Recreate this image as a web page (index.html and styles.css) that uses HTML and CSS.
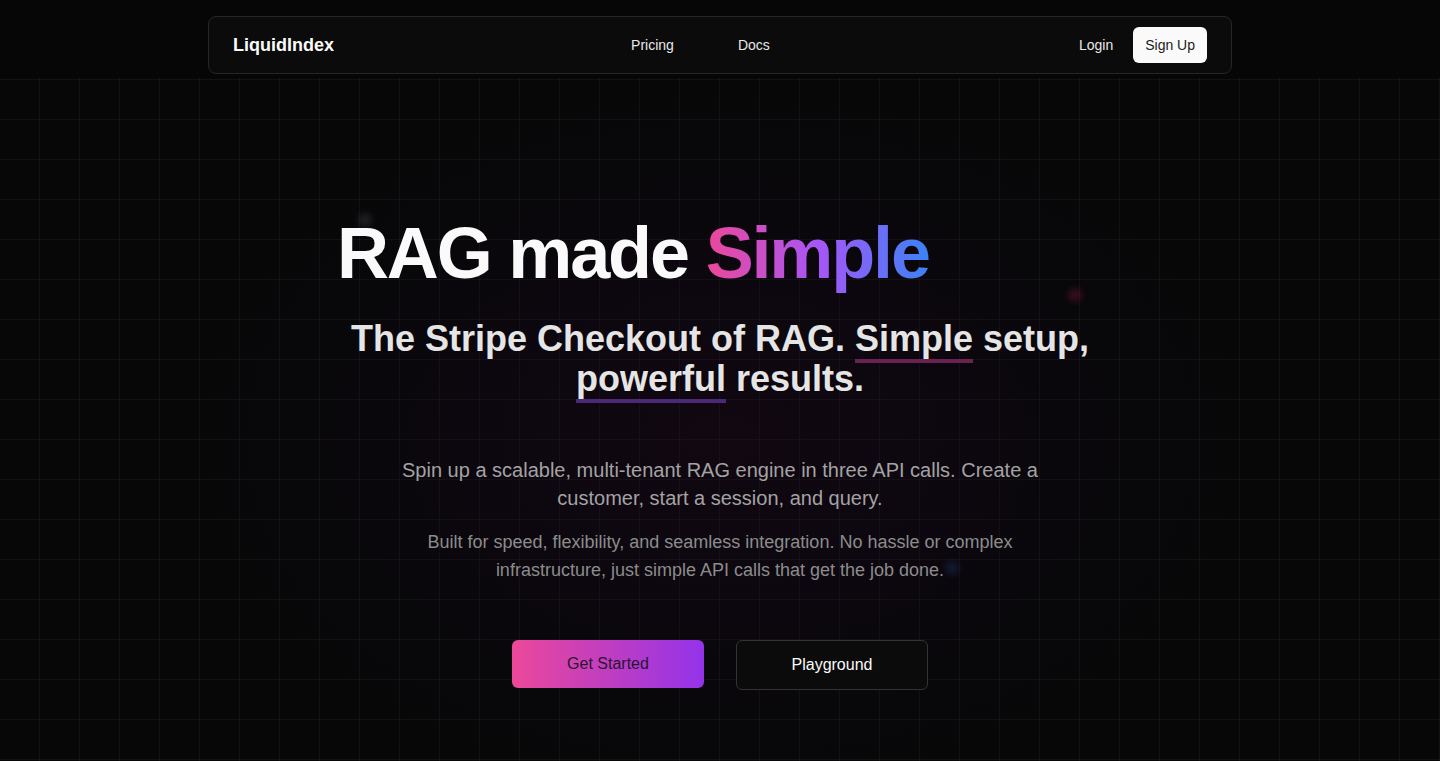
FILE: index.html
```html
<!DOCTYPE html>
<html lang="en">
<head>
<meta charset="utf-8">
<title>LiquidIndex</title>
<link rel="stylesheet" href="styles.css">
</head>
<body>
<div class="page">
  <div class="glow"></div>
  <span class="spark spark-a"></span>
  <span class="spark spark-b"></span>
  <span class="spark spark-c"></span>
  <header class="header">
    <nav class="nav">
      <a class="logo" href="#">LiquidIndex</a>
      <div class="links">
        <a class="link" href="#">Pricing</a>
        <a class="link" href="#">Docs</a>
      </div>
      <div class="auth">
        <a class="login" href="#">Login</a>
        <a class="signup" href="#">Sign Up</a>
      </div>
    </nav>
  </header>
  <main class="hero">
    <div class="title-wrap">
      <h1 class="title">RAG made <span class="grad">Simple</span></h1>
    </div>
    <h2 class="subtitle">The Stripe Checkout of RAG. <span class="ul ul-pink">Simple</span> setup, <span class="ul ul-purple">powerful</span> results.</h2>
    <p class="lead">Spin up a scalable, multi-tenant RAG engine in three API calls. Create a customer, start a session, and query.</p>
    <p class="lead2">Built for speed, flexibility, and seamless integration. No hassle or complex infrastructure, just simple API calls that get the job done.</p>
    <div class="actions">
      <a class="btn btn-primary" href="#">Get Started</a>
      <a class="btn btn-outline" href="#">Playground</a>
    </div>
  </main>
</div>
</body>
</html>
```

FILE: styles.css
```css
* { box-sizing: border-box; }
html, body { margin: 0; padding: 0; }
body {
  background: #070707;
  font-family: "Liberation Sans", Arial, sans-serif;
  color: #fafafa;
  overflow: hidden;
}
a { text-decoration: none; color: inherit; }

.page {
  position: relative;
  min-height: 761px;
  background-color: #070707;
  background-image:
    linear-gradient(to right, transparent 39px, rgba(255,255,255,0.045) 39px, rgba(255,255,255,0.045) 40px),
    linear-gradient(to bottom, transparent 39px, rgba(255,255,255,0.045) 39px, rgba(255,255,255,0.045) 40px);
  background-size: 40px 40px;
  overflow: hidden;
}

.glow {
  position: absolute;
  left: 120px;
  top: 40px;
  width: 1200px;
  height: 800px;
  background: radial-gradient(closest-side, rgba(40,8,40,0.30) 0%, rgba(28,8,38,0.24) 40%, rgba(14,8,26,0.14) 70%, rgba(0,0,0,0) 100%);
  pointer-events: none;
}

.spark {
  position: absolute;
  width: 14px;
  height: 14px;
  border-radius: 50%;
  filter: blur(3px);
}
.spark-a { left: 358px; top: 213px; background: rgba(120,120,140,0.2); }
.spark-b { left: 1068px; top: 288px; background: rgba(160,30,70,0.3); }
.spark-c { left: 945px; top: 561px; background: rgba(40,60,140,0.3); }

.header {
  position: relative;
  height: 78px;
  background: #060606;
  padding-top: 16px;
}

.nav {
  width: 1024px;
  height: 58px;
  margin: 0 auto;
  padding: 0 24px;
  display: flex;
  align-items: center;
  justify-content: space-between;
  background: #0b0b0b;
  border: 1px solid #262626;
  border-radius: 8px;
}
.logo {
  font-size: 18px;
  font-weight: 700;
  color: #fafafa;
}
.links {
  display: flex;
  gap: 32px;
  margin-left: 4px;
}
.link {
  font-size: 14px;
  color: #e8e8e8;
  padding: 0 16px;
}
.auth {
  display: flex;
  align-items: center;
  gap: 4px;
}
.login {
  font-size: 14px;
  color: #e8e8e8;
  padding: 0 16px;
  height: 36px;
  line-height: 36px;
}
.signup {
  font-size: 14px;
  color: #1a1a1a;
  background: #fafafa;
  border-radius: 6px;
  height: 36px;
  line-height: 36px;
  padding: 0 12px;
}

.hero {
  position: relative;
  display: flex;
  flex-direction: column;
  align-items: center;
  text-align: center;
  padding-top: 139px;
}

.title-wrap {
  width: 766px;
  text-align: left;
}
.title {
  margin: 0;
  font-size: 72px;
  line-height: 72px;
  font-weight: 700;
  letter-spacing: -0.03em;
  color: #fafafa;
}
.grad {
  background: linear-gradient(to right, #ec4899, #a855f7, #3b82f6);
  -webkit-background-clip: text;
  background-clip: text;
  color: transparent;
}

.subtitle {
  margin: 30px 0 0;
  max-width: 768px;
  font-size: 36px;
  line-height: 40px;
  font-weight: 700;
  color: #e5e5e5;
}
.ul {
  position: relative;
  display: inline-block;
}
.ul::after {
  content: "";
  position: absolute;
  left: 0;
  right: 0;
  bottom: -4px;
  height: 4px;
}
.ul-pink::after { background: #6a2350; }
.ul-purple::after { background: #4b2878; }

.lead {
  margin: 57px 0 0;
  max-width: 672px;
  font-size: 20px;
  line-height: 28px;
  color: #a3a3a3;
}
.lead2 {
  margin: 16px 0 0;
  max-width: 672px;
  font-size: 18px;
  line-height: 28px;
  color: #8c8c8c;
}

.actions {
  display: flex;
  gap: 32px;
  margin-top: 56px;
  align-items: flex-start;
}
.btn {
  width: 192px;
  border-radius: 6px;
  font-size: 16px;
  display: flex;
  align-items: center;
  justify-content: center;
}
.btn-primary {
  height: 48px;
  background: linear-gradient(to right, #ec4899, #9333ea);
  color: #2a1530;
}
.btn-outline {
  height: 50px;
  background: #0b0b0b;
  border: 1px solid #333;
  color: #fafafa;
}
```
